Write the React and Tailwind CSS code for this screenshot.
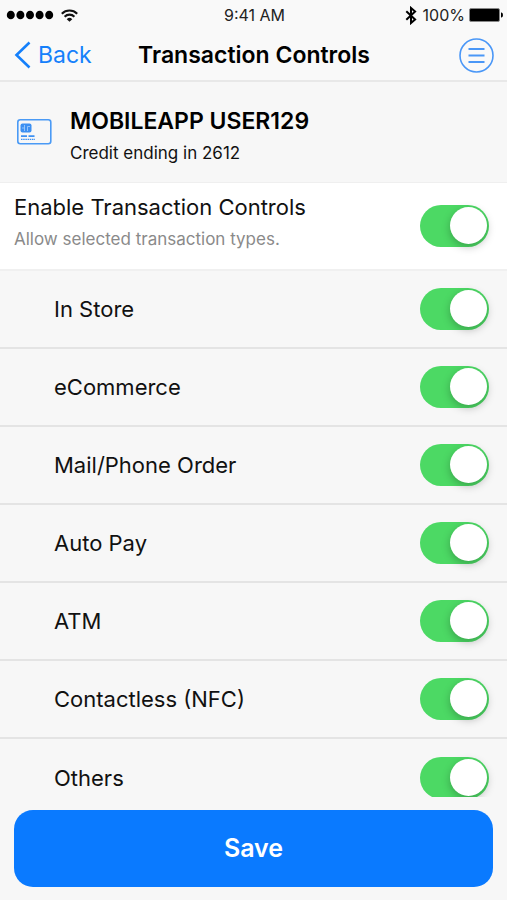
import { useState } from "react";

const TYPES = [
  { id: "inStore", label: "In Store" },
  { id: "ecommerce", label: "eCommerce" },
  { id: "mailPhone", label: "Mail/Phone Order" },
  { id: "autoPay", label: "Auto Pay" },
  { id: "atm", label: "ATM" },
  { id: "nfc", label: "Contactless (NFC)" },
  { id: "others", label: "Others" },
];

function Toggle({ id, checked, onChange }) {
  return (
    <input
      id={id}
      type="checkbox"
      role="switch"
      checked={checked}
      onChange={onChange}
      className="h-[42px] w-[69px] shrink-0 cursor-pointer appearance-none rounded-full bg-gray-300 p-[2px] transition-colors checked:bg-[#4cd964] before:block before:h-[37px] before:w-[37px] before:rounded-full before:bg-white before:shadow-[0_3px_8px_rgba(0,0,0,0.25)] before:transition-transform checked:before:translate-x-[28px]"
    />
  );
}

function StatusBar() {
  return (
    <div className="grid h-[30px] grid-cols-3 items-center pr-[4px] pl-[6px] text-base text-[#222]">
      <div className="flex items-center gap-[7px]">
        <svg width="48" height="10" viewBox="0 0 48 10" fill="#000" aria-hidden="true">
          <ellipse cx="4.8" cy="5" rx="4" ry="4.3" />
          <ellipse cx="14.4" cy="5" rx="4" ry="4.3" />
          <ellipse cx="24" cy="5" rx="4" ry="4.3" />
          <ellipse cx="33.6" cy="5" rx="4" ry="4.3" />
          <ellipse cx="43.2" cy="5" rx="4" ry="4.3" />
        </svg>
        <svg width="17" height="13" viewBox="0 0 17 13" fill="none" stroke="#111" strokeWidth="2.1" aria-hidden="true">
          <path d="M0.8 4.7a10.9 10.9 0 0 1 15.4 0" />
          <path d="M3.6 7.7a6.9 6.9 0 0 1 9.8 0" />
          <path d="M8.5 12.8L5.7 10.2a4 4 0 0 1 5.6 0z" fill="#111" stroke="none" />
        </svg>
      </div>
      <span className="text-center">9:41 AM</span>
      <div className="flex items-center justify-end gap-1">
        <svg width="12" height="19" viewBox="0 0 12 19" fill="none" stroke="#000" strokeWidth="2" aria-hidden="true">
          <path d="M1.3 5.2l8.8 8.2L6 17V2l4.1 3.6-8.8 8.2" />
        </svg>
        <span className="ml-[2px]">100%</span>
        <svg width="34" height="14" viewBox="0 0 34 14" aria-hidden="true">
          <rect x="0.5" y="0.5" width="30" height="13" rx="1.5" fill="#000" stroke="#888" />
          <path d="M32 4.5h0.5a1.5 2.5 0 0 1 0 5H32z" fill="#000" />
        </svg>
      </div>
    </div>
  );
}

function CardIcon() {
  return (
    <svg width="35" height="26" viewBox="0 0 35 26" className="shrink-0" aria-hidden="true">
      <rect x="0.8" y="0.8" width="33" height="24" rx="2.5" fill="none" stroke="#4a9af5" strokeWidth="1.6" />
      <rect x="3.5" y="4.5" width="11" height="9" rx="2" fill="#3d90f2" />
      <path d="M7.5 6v6M7.5 9H5M10.5 12V7.5H13" fill="none" stroke="#a9d0fb" strokeWidth="0.8" />
      <path d="M4 17.2h6M11.5 17.2h6" stroke="#3d90f2" strokeWidth="1.7" />
      <path d="M4 20.3h14" stroke="#3d90f2" strokeWidth="1.2" strokeDasharray="1.5 0.7" />
    </svg>
  );
}

export default function App() {
  const [enabled, setEnabled] = useState(true);
  const [allowed, setAllowed] = useState(() =>
    Object.fromEntries(TYPES.map((t) => [t.id, true]))
  );

  const toggleType = (id) => {
    setAllowed((prev) => ({ ...prev, [id]: !prev[id] }));
  };

  return (
    <div className="flex h-dvh flex-col bg-[#f7f7f7] font-['Inter','Liberation_Sans',sans-serif] text-[#111]">
      <header className="shrink-0 border-b-2 border-[#e8e8e8] bg-[#f9f9f9]">
        <StatusBar />
        <div className="grid h-[50px] grid-cols-[1fr_auto_1fr] items-center pr-[13px] pl-[14px]">
          <button type="button" className="flex items-center gap-[7px] justify-self-start text-[23px] text-[#1580fb]">
            <svg width="17" height="28" viewBox="0 0 17 28" fill="none" stroke="currentColor" strokeWidth="2.6" aria-hidden="true">
              <path d="M15.5 1.5L2.5 14L15.5 26.5" />
            </svg>
            Back
          </button>
          <h1 className="text-[23px] font-semibold text-black">Transaction Controls</h1>
          <button type="button" aria-label="Menu" className="justify-self-end">
            <svg width="35" height="35" viewBox="0 0 35 35" fill="none" stroke="#4a97f7" strokeWidth="1.6" aria-hidden="true">
              <circle cx="17.5" cy="17.5" r="16.5" />
              <path d="M9.5 11h16M9.5 17.5h16M9.5 24h16" strokeWidth="1.9" />
            </svg>
          </button>
        </div>
      </header>

      <main className="min-h-0 flex-1 overflow-y-auto [scrollbar-width:none]">
        <section className="flex h-[101px] items-center gap-[18px] border-b border-[#efefef] px-[17px]">
          <CardIcon />
          <div className="pt-[10px]">
            <h2 className="text-[23px] leading-8 font-semibold text-black">MOBILEAPP USER129</h2>
            <p className="text-[17px] leading-8">Credit ending in 2612</p>
          </div>
        </section>

        <section className="flex h-[86px] items-center justify-between bg-white pr-[18px] pl-[14px]">
          <div className="pb-[6px]">
            <label htmlFor="enable" className="block text-[22px] leading-8">Enable Transaction Controls</label>
            <p className="text-[17px] leading-8 text-[#8a8a8a]">Allow selected transaction types.</p>
          </div>
          <Toggle id="enable" checked={enabled} onChange={() => setEnabled(!enabled)} />
        </section>

        <ul className="border-t-2 border-[#f0f0f0]">
          {TYPES.map((type) => (
            <li
              key={type.id}
              className="flex h-[78px] items-center justify-between border-b-2 border-[#e4e4e4] pr-[18px] pl-[54px] last:border-b-0"
            >
              <label htmlFor={type.id} className="text-[22px]">{type.label}</label>
              <Toggle id={type.id} checked={allowed[type.id]} onChange={() => toggleType(type.id)} />
            </li>
          ))}
        </ul>
      </main>

      <footer className="shrink-0 px-[14px] pt-[13px] pb-[13px]">
        <button type="button" className="h-[77px] w-full rounded-[19px] bg-[#0a7aff] text-[25px] font-semibold text-white">
          Save
        </button>
      </footer>
    </div>
  );
}
